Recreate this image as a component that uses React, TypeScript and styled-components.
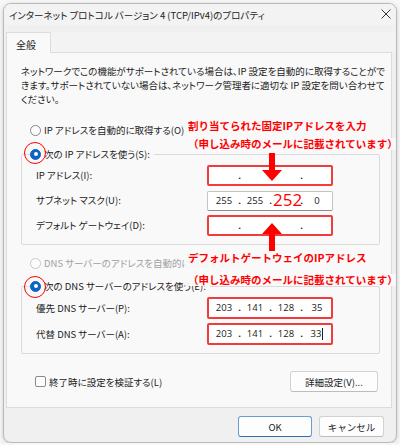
import React from "react";
import styled, { createGlobalStyle } from "styled-components";

const GlobalStyle = createGlobalStyle`
  html, body { margin: 0; padding: 0; background: #f7f7f7; }
  body {
    font-family: "Noto Sans CJK JP", "Noto Sans", sans-serif;
    font-feature-settings: "palt";
    color: #1b1b1b;
  }
  * { box-sizing: border-box; }
`;

const Window = styled.div`
  position: relative;
  margin: 3px 0 0 3px;
  width: 394px;
  height: 440px;
  border: 1px solid #b9b9b9;
  border-radius: 8px;
  background: #f0f0f0;
  box-shadow: 0 1px 4px rgba(0, 0, 0, 0.18);
  display: flex;
  flex-direction: column;
  overflow: hidden;
`;

const TitleBar = styled.div`
  height: 21px;
  display: flex;
  align-items: center;
  justify-content: space-between;
  padding: 0 5px 0 5px;
  font-size: 9.5px;
  color: #222;
  background: #f3f3f3;
`;

const Close = styled.svg`
  width: 10px;
  height: 10px;
  margin-top: -2px;
`;

const TabStrip = styled.div`
  display: flex;
  margin: 7px 0 0 2px;
  background: #f3f3f3;
`;

const Tab = styled.div`
  width: 45px;
  height: 21px;
  padding: 4px 0 0 9px;
  font-size: 10px;
  background: #f9f9f9;
  border: 1px solid #dcdcdc;
  border-bottom: none;
  margin-bottom: -1px;
  position: relative;
  z-index: 1;
`;

const Panel = styled.div`
  height: 356px;
  margin: 0 4px 0 2px;
  background: #f9f9f9;
  border: 1px solid #dcdcdc;
  padding: 11px 11px 0 14px;
  font-size: 9.5px;
`;

const Description = styled.p`
  margin: 0;
  line-height: 14px;
  white-space: nowrap;
`;

const RadioRow = styled.label<{ $disabled?: boolean }>`
  display: flex;
  align-items: center;
  gap: 3px;
  height: 14px;
  margin-left: 9px;
  white-space: nowrap;
  color: ${(p) => (p.$disabled ? "#a0a0a0" : "#1b1b1b")};
`;

const RadioDot = styled.span<{ $checked?: boolean; $disabled?: boolean }>`
  width: 11px;
  height: 11px;
  border-radius: 50%;
  flex: none;
  background: ${(p) => (p.$checked ? "#0b63c4" : "#fdfdfd")};
  border: 1px solid
    ${(p) => (p.$checked ? "#0b63c4" : p.$disabled ? "#c8c8c8" : "#858585")};
  display: flex;
  align-items: center;
  justify-content: center;
  &::after {
    content: "";
    width: 4px;
    height: 4px;
    border-radius: 50%;
    background: #fff;
    display: ${(p) => (p.$checked ? "block" : "none")};
  }
`;

const Group = styled.fieldset<{ $gap: number; $top: number }>`
  margin: ${(p) => p.$gap}px 0 0 0;
  padding: ${(p) => p.$top}px 46px 8px 14px;
  border: 1px solid #dadada;
  border-radius: 2px;
  display: grid;
  grid-template-columns: 1fr 126px;
  row-gap: 4px;
  align-items: center;
  min-width: 0;
`;

const Legend = styled.legend`
  margin-left: -6px;
  padding: 0 4px 0 0;
`;

const FieldLabel = styled.span`
  line-height: 21px;
`;

const IpBox = styled.div<{ $marked?: boolean; $h: number }>`
  height: ${(p) => p.$h}px;
  background: #fff;
  border: ${(p) => (p.$marked ? "2px solid #f23b3b" : "1px solid #c4c4c4")};
  border-bottom-color: ${(p) => (p.$marked ? "#f23b3b" : "#8c8c8c")};
  border-radius: 2px;
  display: grid;
  grid-template-columns: 26px 5px 26px 5px 26px 5px 26px;
  align-items: center;
  padding-left: ${(p) => (p.$marked ? 2 : 3)}px;
  font-family: "Open Sans", "Noto Sans", sans-serif;
  font-size: 9.5px;
  color: #222;
`;

const Octet = styled.span<{ $big?: boolean }>`
  text-align: center;
  font-size: ${(p) => (p.$big ? "17px" : "9.5px")};
  color: ${(p) => (p.$big ? "#f00" : "#222")};
  line-height: 1;
  margin-top: ${(p) => (p.$big ? "-2px" : "0")};
`;

const Dot = styled.span`
  text-align: center;
  font-weight: bold;
  line-height: 1;
`;

const Caret = styled.span`
  display: inline-block;
  width: 1px;
  height: 12px;
  background: #222;
  vertical-align: middle;
  margin-left: 1px;
`;

const BottomRow = styled.div`
  display: flex;
  align-items: center;
  justify-content: space-between;
  margin: 17px 2px 0 14px;
`;

const CheckLabel = styled.label`
  display: flex;
  align-items: center;
  gap: 3px;
`;

const CheckBox = styled.span`
  width: 11px;
  height: 11px;
  border: 1px solid #8a8a8a;
  border-radius: 2px;
  background: #fdfdfd;
`;

const Button = styled.button<{ $primary?: boolean; $w: number }>`
  width: ${(p) => p.$w}px;
  height: 21px;
  font-family: inherit;
  font-size: 9.5px;
  color: #1b1b1b;
  background: #fdfdfd;
  border: 1px solid ${(p) => (p.$primary ? "#6a9bd1" : "#d2d2d2")};
  border-bottom-color: ${(p) => (p.$primary ? "#2f6fb8" : "#bcbcbc")};
  border-radius: 3px;
  padding: 0;
`;

const Footer = styled.div`
  display: flex;
  justify-content: flex-end;
  gap: 7px;
  padding: 8px 12px 0 0;
`;

const Note = styled.div<{ $x: number; $y: number; $pad?: number }>`
  position: absolute;
  left: ${(p) => p.$x}px;
  top: ${(p) => p.$y}px;
  padding: 0 0 ${(p) => p.$pad ?? 0}px 3px;
  background: rgba(249, 249, 249, 0.92);
  font-feature-settings: normal;
  font-size: 10.5px;
  font-weight: bold;
  color: #f00;
  line-height: 12px;
  white-space: nowrap;
`;

const Ring = styled.div<{ $x: number; $y: number }>`
  position: absolute;
  left: ${(p) => p.$x}px;
  top: ${(p) => p.$y}px;
  width: 22px;
  height: 22px;
  border: 1.5px solid #f00;
  border-radius: 50%;
`;

const Arrow = styled.svg<{ $x: number; $y: number }>`
  position: absolute;
  left: ${(p) => p.$x}px;
  top: ${(p) => p.$y}px;
  width: 22px;
  height: 28px;
`;

type IpProps = {
  parts?: React.ReactNode[];
  marked?: boolean;
  h: number;
};

const IpField = ({ parts = ["", "", "", ""], marked, h }: IpProps) => (
  <IpBox $marked={marked} $h={h}>
    {parts.map((p, i) => (
      <React.Fragment key={i}>
        {i > 0 && <Dot>.</Dot>}
        <Octet>{p}</Octet>
      </React.Fragment>
    ))}
  </IpBox>
);

const App = () => {
  return (
    <>
      <GlobalStyle />
      <Window>
        <TitleBar>
          <span>インターネット プロトコル バージョン 4 (TCP/IPv4)のプロパティ</span>
          <Close viewBox="0 0 10 10">
            <path d="M0.5 0.5 L9.5 9.5 M9.5 0.5 L0.5 9.5" stroke="#333" strokeWidth="1" />
          </Close>
        </TitleBar>
        <TabStrip>
          <Tab>全般</Tab>
        </TabStrip>
        <Panel>
          <Description>
            ネットワークでこの機能がサポートされている場合は、IP 設定を自動的に取得することがで
            <br />
            きます。サポートされていない場合は、ネットワーク管理者に適切な IP 設定を問い合わせて
            <br />
            ください。
          </Description>

          <RadioRow style={{ marginTop: 17 }}>
            <RadioDot />
            IP アドレスを自動的に取得する(O)
          </RadioRow>
          <Group $gap={10} $top={4}>
            <Legend>
              <RadioRow as="span" style={{ marginLeft: 0 }}>
                <RadioDot $checked />
                次の IP アドレスを使う(S):
              </RadioRow>
            </Legend>
            <FieldLabel>IP アドレス(I):</FieldLabel>
            <IpField marked h={21} />
            <FieldLabel>サブネット マスク(U):</FieldLabel>
            <IpBox $h={20}>
              <Octet>255</Octet>
              <Dot>.</Dot>
              <Octet>255</Octet>
              <Dot>.</Dot>
              <Octet $big>252</Octet>
              <Dot>.</Dot>
              <Octet>0</Octet>
            </IpBox>
            <FieldLabel>デフォルト ゲートウェイ(D):</FieldLabel>
            <IpField marked h={21} />
          </Group>

          <RadioRow $disabled style={{ marginTop: 11 }}>
            <RadioDot $disabled />
            DNS サーバーのアドレスを自動的に取得する(B)
          </RadioRow>
          <Group $gap={9} $top={4}>
            <Legend>
              <RadioRow as="span" style={{ marginLeft: 0 }}>
                <RadioDot $checked />
                次の DNS サーバーのアドレスを使う(E):
              </RadioRow>
            </Legend>
            <FieldLabel>優先 DNS サーバー(P):</FieldLabel>
            <IpField marked h={22} parts={["203", "141", "128", "35"]} />
            <FieldLabel>代替 DNS サーバー(A):</FieldLabel>
            <IpField
              marked
              h={22}
              parts={["203", "141", "128", <>33<Caret /></>]}
            />
          </Group>

          <BottomRow>
            <CheckLabel>
              <CheckBox />
              終了時に設定を検証する(L)
            </CheckLabel>
            <Button $w={88}>詳細設定(V)...</Button>
          </BottomRow>
        </Panel>
        <Footer>
          <Button $primary $w={74}>OK</Button>
          <Button $w={65}>キャンセル</Button>
        </Footer>

        <Note $x={181} $y={116}>割り当てられた固定IPアドレスを入力</Note>
        <Note $x={181} $y={134}>（申し込み時のメールに記載されています）</Note>
        <Note $x={181} $y={248} $pad={10}>デフォルトゲートウェイのIPアドレス</Note>
        <Note $x={181} $y={270}>（申し込み時のメールに記載されています）</Note>

        <Ring $x={20} $y={138} />
        <Ring $x={20} $y={272} />

        <Arrow $x={257} $y={149} viewBox="0 0 22 28">
          <path d="M8 0 H14 V17 H21 L11 28 L1 17 H8 Z" fill="#f00" />
        </Arrow>
        <Arrow $x={257} $y={219} viewBox="0 0 22 28">
          <path d="M8 28 H14 V11 H21 L11 0 L1 11 H8 Z" fill="#f00" />
        </Arrow>
      </Window>
    </>
  );
};

export default App;
